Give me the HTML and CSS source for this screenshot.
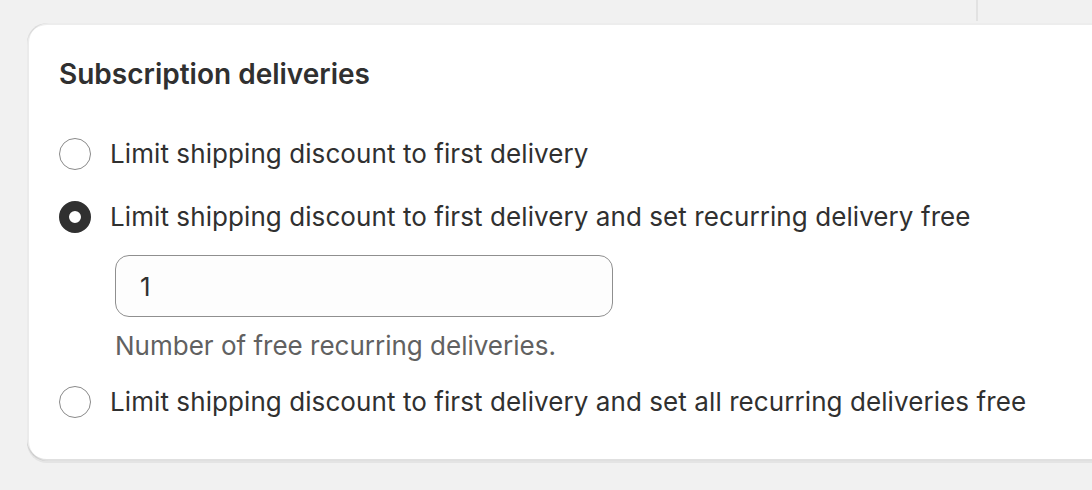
FILE: index.html
```html
<!DOCTYPE html>
<html lang="en">
<head>
<meta charset="utf-8">
<link rel="stylesheet" href="styles.css">
</head>
<body>
<div class="divider"></div>
<section class="card">
  <h2 class="card-title">Subscription deliveries</h2>
  <div class="options">
    <label class="option">
      <span class="radio"></span>
      <span class="option-label">Limit shipping discount to first delivery</span>
    </label>
    <label class="option option-selected">
      <span class="radio radio-checked"></span>
      <span class="option-label">Limit shipping discount to first delivery and set recurring delivery free</span>
    </label>
    <div class="nested">
      <div class="input">1</div>
      <div class="help">Number of free recurring deliveries.</div>
    </div>
    <label class="option option-last">
      <span class="radio"></span>
      <span class="option-label">Limit shipping discount to first delivery and set all recurring deliveries free</span>
    </label>
  </div>
</section>
</body>
</html>
```
FILE: styles.css
```css
html, body {
  margin: 0;
  padding: 0;
}
body {
  background: #f1f1f1;
  font-family: Inter, "Noto Sans", sans-serif;
  color: #303030;
  width: 1092px;
  height: 490px;
  overflow: hidden;
  position: relative;
  padding-top: 23px;
  box-sizing: border-box;
}
.divider {
  position: absolute;
  left: 976px;
  top: 0;
  width: 2px;
  height: 21px;
  background: #e2e2e2;
}
.card {
  margin-left: 27px;
  width: 1100px;
  height: 438px;
  box-sizing: border-box;
  background: #ffffff;
  border-radius: 20px;
  padding: 35px 0 0 32px;
  box-shadow:
    inset 2px 0 0 rgba(0, 0, 0, 0.08),
    inset 0 -2px 0 rgba(0, 0, 0, 0.12),
    inset 0 2px 0 rgba(204, 204, 204, 0.35),
    0 2px 0 rgba(26, 26, 26, 0.06);
}
.card-title {
  margin: 0;
  font-size: 28px;
  line-height: 32px;
  font-weight: 600;
  color: #303030;
}
.options {
  display: flex;
  flex-direction: column;
  margin-top: 48px;
}
.option {
  display: flex;
  align-items: center;
  gap: 19px;
  height: 32px;
}
.option-selected {
  margin-top: 31px;
}
.option-last {
  margin-top: 24px;
}
.radio {
  width: 32px;
  height: 32px;
  box-sizing: border-box;
  border-radius: 50%;
  border: 1.5px solid #8a8a8a;
  background: #fff;
  flex: none;
}
.radio-checked {
  border: 10px solid #303030;
}
.option-label {
  font-size: 26px;
  line-height: 32px;
  font-weight: 400;
  letter-spacing: 0.08px;
}
.nested {
  margin-left: 56px;
  display: flex;
  flex-direction: column;
  margin-top: 22px;
}
.input {
  width: 498px;
  height: 62px;
  box-sizing: border-box;
  border: 1.5px solid #8f8f8f;
  border-radius: 14px;
  background: #fdfdfd;
  padding-left: 24px;
  display: flex;
  align-items: center;
  font-size: 26px;
}
.help {
  margin-top: 13px;
  font-size: 26px;
  line-height: 32px;
  color: #616161;
}
```
